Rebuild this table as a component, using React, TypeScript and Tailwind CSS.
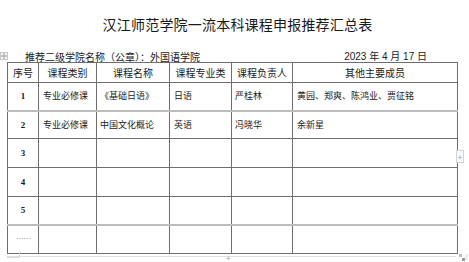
import React from "react";

const rows = [
  { n: "1", a: "专业必修课", b: "《基础日语》", c: "日语", d: "严桂林", e: "黄园、郑爽、陈鸿业、贾征铭", h: "h-[28px]", thick: true },
  { n: "2", a: "专业必修课", b: "中国文化概论", c: "英语", d: "冯晓华", e: "余新星", h: "h-[28px]", thick: false },
  { n: "3", a: "", b: "", c: "", d: "", e: "", h: "h-[29px]", thick: false },
  { n: "4", a: "", b: "", c: "", d: "", e: "", h: "h-[29px]", thick: false },
  { n: "5", a: "", b: "", c: "", d: "", e: "", h: "h-[28px]", thick: true },
];

export default function App() {
  const cjk = { fontFamily: '"Noto Sans CJK SC", "Liberation Sans", sans-serif' };
  const td = "border border-[#6e6e6e] p-0 align-middle";
  return (
    <div className="relative w-[469px] h-[262px] bg-white overflow-hidden text-[#222]" style={cjk}>
      <div className="pt-[14px] h-[34px] flex justify-center pl-[6px]">
        <div className="text-[14px] leading-[20px] tracking-[0.2px] text-[#1a1a1a]">汉江师范学院一流本科课程申报推荐汇总表</div>
      </div>
      <div className="relative h-[28px]">
        <div className="absolute left-0 top-[18px] w-[8px] h-[8px] border border-[#c8c8c8] bg-[#f4f4f4] flex items-center justify-center">
          <svg width="6" height="6" viewBox="0 0 6 6"><path d="M3 0v6M0 3h6" stroke="#888" strokeWidth="0.8" /></svg>
        </div>
        <div className="flex pt-[16px] pl-[25px] pr-[42px] text-[10px] leading-[14px] text-[#1a1a1a]">
          <span>推荐二级学院名称（公章）：外国语学院</span>
          <span className="ml-auto" style={{ fontFamily: '"Liberation Sans", "Noto Sans CJK SC", sans-serif' }}>2023 年 4 月 17 日</span>
        </div>
      </div>
      <table className="ml-[7px] border-collapse table-fixed w-[450px] text-[#1a1a1a]">
        <colgroup>
          <col className="w-[31px]" />
          <col className="w-[58px]" />
          <col className="w-[73px]" />
          <col className="w-[62px]" />
          <col className="w-[61px]" />
          <col className="w-[165px]" />
        </colgroup>
        <thead>
          <tr className="h-[20px] text-[10px] leading-[12px] text-center">
            <td className={td}>序号</td>
            <td className={td}>课程类别</td>
            <td className={td}>课程名称</td>
            <td className={td}>课程专业类</td>
            <td className={td}>课程负责人</td>
            <td className={td}>其他主要成员</td>
          </tr>
        </thead>
        <tbody className="text-[9px] leading-[12px]">
          {rows.map((r) => (
            <tr key={r.n} className={`${r.h} ${r.thick ? "border-b-2 border-b-[#bdbdbd]" : ""}`}>
              <td className={`${td} text-center text-[9px] font-bold`} style={{ fontFamily: '"Liberation Serif", serif' }}>{r.n}</td>
              <td className={`${td} pl-[4px]`}>{r.a}</td>
              <td className={`${td} pl-[3px]`}>{r.b}</td>
              <td className={`${td} pl-[4px]`}>{r.c}</td>
              <td className={`${td} pl-[3px]`}>{r.d}</td>
              <td className={`${td} pl-[4px]`}>{r.e}</td>
            </tr>
          ))}
          <tr className="h-[29px]">
            <td className={`${td} text-center text-[8px] text-[#9aa0b4] tracking-[-1px]`}>……</td>
            <td className={td}></td>
            <td className={td}></td>
            <td className={td}></td>
            <td className={td}></td>
            <td className={td}></td>
          </tr>
        </tbody>
      </table>
      <div className="absolute left-[456px] top-[150px] w-[8px] h-[13px] border border-[#d4d4d4] bg-[#fafafa] text-[8px] leading-[11px] text-center text-[#999]">+</div>
      <div className="absolute left-[7px] top-[256px] w-[449px] h-[6px] border-t border-[#e2e2e2]"></div>
      <div className="absolute left-[7px] top-[253px] w-[13px] h-[5px] border-b border-r border-[#d8d8d8]"></div>
      <div className="absolute left-[226px] top-[253px] text-[8px] leading-[10px] text-[#999]">+</div>
      <div className="absolute left-[459px] top-[254px]">
        <svg width="9" height="8" viewBox="0 0 9 8">
          <rect x="0" y="0" width="3" height="3" fill="#bbb" />
          <rect x="3" y="4" width="3" height="3" fill="#999" />
          <path d="M6 1h3M6 3h3M6 5h3" stroke="#ccc" strokeWidth="0.7" />
        </svg>
      </div>
    </div>
  );
}
